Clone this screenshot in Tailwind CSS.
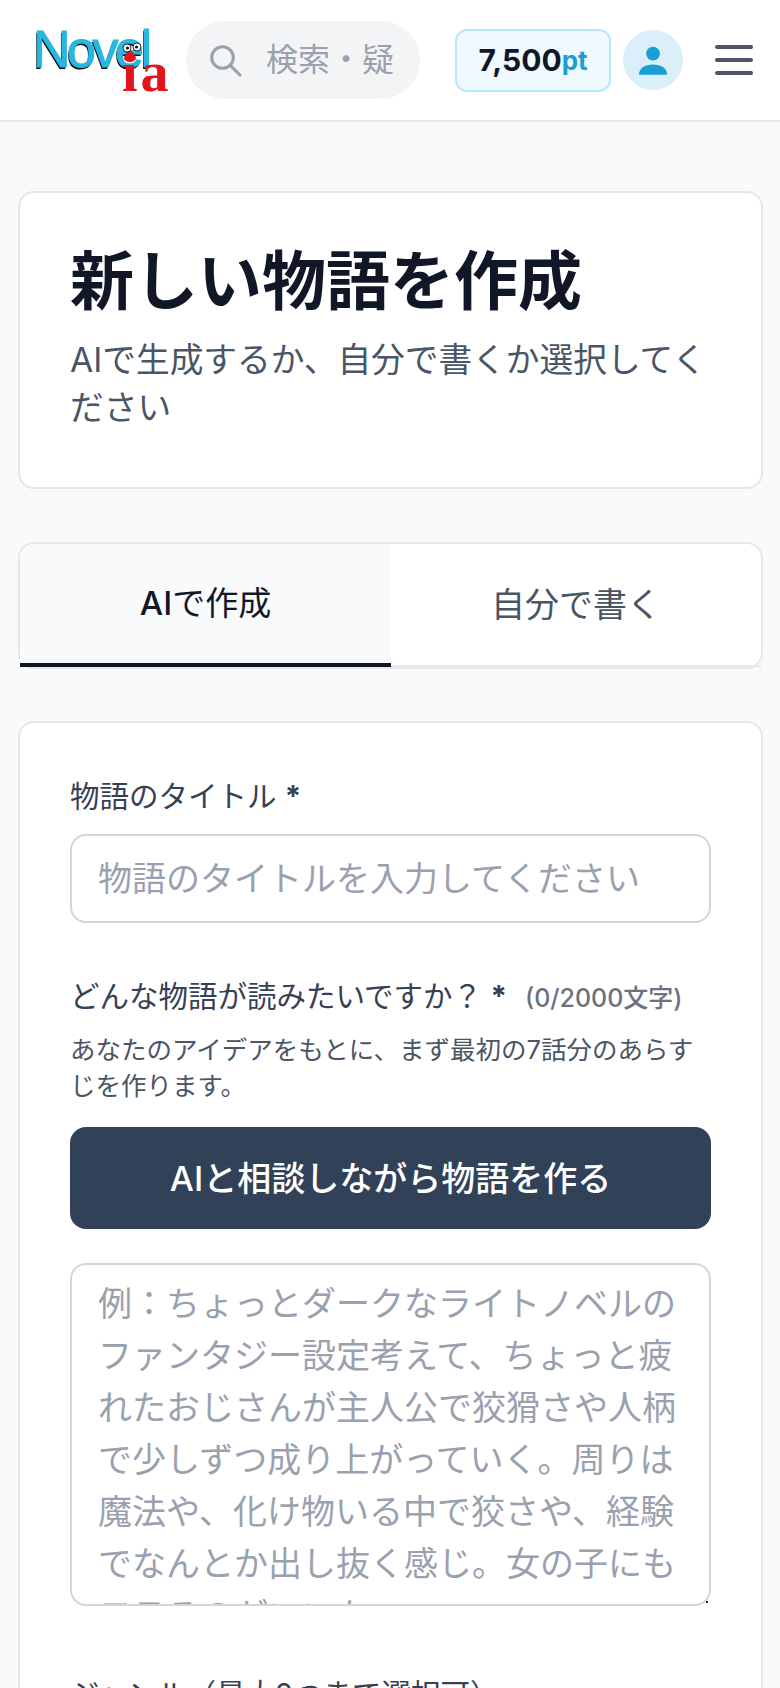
<!DOCTYPE html>
<html lang="ja">
<head>
    <meta charset="UTF-8">
    <meta name="viewport" content="width=device-width, initial-scale=1.0">
    <title>新しい物語を作成</title>
    <script src="https://cdn.jsdelivr.net/npm/@tailwindcss/browser@4"></script>
</head>
<body class="bg-gray-50 h-[1688px] overflow-hidden font-['Inter','Noto_Sans_CJK_JP',sans-serif]">

    <!-- Header -->
    <header class="bg-white h-[122px] flex items-center pl-[33px] border-b-2 border-gray-200">
        <div class="relative w-[137px] h-[66px] shrink-0">
            <span class="absolute left-0 top-[-8px] text-[52px] leading-[60px] tracking-[-3.5px] text-[#29b6e0] font-['Liberation_Sans',sans-serif] [-webkit-text-stroke:1px_#29b6e0] [text-shadow:-1px_2px_0_#111]">Novel</span>
            <span class="absolute left-[89px] top-[18px] text-[56px] leading-[54px] tracking-[3px] font-bold text-[#e3141c] font-['Liberation_Serif',serif]">ia</span>
            <!-- face on the e -->
            <svg class="absolute left-[85px] top-[12px]" width="30" height="26" viewBox="0 0 30 26">
                <ellipse cx="12" cy="19" rx="6" ry="4" fill="#e3141c"/>
                <circle cx="9" cy="9" r="4" fill="#fff" stroke="#222"/>
                <circle cx="19" cy="8" r="4" fill="#fff" stroke="#222"/>
                <circle cx="9.500" cy="9" r="1.600" fill="#111"/>
                <circle cx="18.500" cy="8" r="1.600" fill="#111"/>
            </svg>
        </div>

        <div class="ml-[16px] w-[234px] h-[78px] shrink-0 bg-gray-100 rounded-full flex items-center pl-[19px]">
            <svg class="w-[40px] h-[40px] shrink-0 text-gray-400" fill="none" stroke="currentColor" stroke-width="1.800" viewBox="0 0 24 24">
                <path stroke-linecap="round" stroke-linejoin="round" d="M21 21l-5.200-5.200M17 10.500a6.500 6.500 0 11-13 0 6.500 6.500 0 0113 0z"/>
            </svg>
            <span class="ml-[21px] whitespace-nowrap text-[32px] text-gray-400">検索・疑</span>
        </div>

        <div class="ml-[35px] w-[156px] h-[63px] shrink-0 bg-sky-50 border-2 border-sky-200 rounded-[12px] flex items-center justify-center font-bold">
            <span class="text-[30px] text-gray-900">7,500</span><span class="text-[26px] text-[#1a9fd4]">pt</span>
        </div>

        <div class="ml-[12px] w-[60px] h-[60px] shrink-0 rounded-full bg-[#dbeffa] flex items-center justify-center">
            <svg class="w-[32px] h-[32px] text-[#1a9fd4]" fill="currentColor" viewBox="0 0 24 24">
                <circle cx="12" cy="7.200" r="5.200"/>
                <path d="M1.500 23c0-5 4.500-7.600 10.500-7.600S22.500 18 22.500 23z"/>
            </svg>
        </div>

        <div class="ml-[32px] w-[38px] flex flex-col gap-[9px] shrink-0">
            <div class="h-[4px] rounded-full bg-gray-600"></div>
            <div class="h-[4px] rounded-full bg-gray-600"></div>
            <div class="h-[4px] rounded-full bg-gray-600"></div>
        </div>
    </header>

    <main class="pl-[18px] pr-[17px] pt-[69px]">
        <!-- Title card -->
        <section class="bg-white border-2 border-gray-200 rounded-[16px] h-[298px] px-[50px] pt-[50px]">
            <h1 class="text-[64px] leading-[76px] font-bold text-gray-900">新しい物語を作成</h1>
            <p class="mt-[17px] text-[33.700px] leading-[48px] text-gray-600">AIで生成するか、自分で書くか選択してください</p>
        </section>

        <!-- Tabs -->
        <div class="mt-[53px] h-[127px] bg-white border-2 border-gray-200 rounded-[16px] flex">
            <div class="w-[371px] h-[123px] bg-gray-50 border-b-4 border-gray-900 rounded-tl-[16px] flex items-center justify-center text-[33px] text-gray-900"><span><span class="font-medium">AI</span>で作成</span></div>
            <div class="flex-1 h-[123px] border-b-2 border-gray-200 flex items-center justify-center text-[34px] text-gray-600">自分で書く</div>
        </div>

        <!-- Form card -->
        <section class="mt-[52px] bg-white border-2 border-gray-200 rounded-[16px] px-[50px] pt-[51px] pb-[40px]">
            <label class="block text-[29.500px] leading-[44px] text-gray-700">物語のタイトル <span class="font-bold">*</span></label>
            <input type="text" class="block mt-[16px] w-full h-[89px] px-[26px] bg-white border-2 border-gray-300 rounded-[16px] text-[34px] placeholder:text-gray-400" placeholder="物語のタイトルを入力してください">

            <div class="mt-[51px] flex items-baseline">
                <label class="text-[29.500px] leading-[44px] text-gray-700">どんな物語が読みたいですか？ <span class="font-bold">*</span></label>
                <span class="ml-[18px] text-[25px] font-medium text-gray-500">(0/2000文字)</span>
            </div>
            <p class="mt-[14px] text-[25.500px] leading-[36px] text-gray-600">あなたのアイデアをもとに、まず最初の7話分のあらすじを作ります。</p>

            <button class="block mt-[23px] w-full h-[102px] bg-slate-700 rounded-[16px] text-[34px] font-medium text-white">AIと相談しながら物語を作る</button>

            <div class="relative mt-[34px]">
                <textarea class="block w-full h-[343px] px-[26px] py-[13px] bg-white border-2 border-gray-300 rounded-[16px] text-[34px] leading-[52px] overflow-hidden resize-none placeholder:text-gray-400" placeholder="例：ちょっとダークなライトノベルのファンタジー設定考えて、ちょっと疲れたおじさんが主人公で狡猾さや人柄で少しずつ成り上がっていく。周りは魔法や、化け物いる中で狡さや、経験でなんとか出し抜く感じ。女の子にもモテるのがいいな。"></textarea>
                <div class="absolute right-[3px] bottom-[3px] w-[2px] h-[2px] bg-gray-800"></div>
            </div>

            <label class="block mt-[66px] text-[29.500px] leading-[44px] text-gray-700">ジャンル（最大2つまで選択可）</label>
        </section>
    </main>

</body>
</html>
